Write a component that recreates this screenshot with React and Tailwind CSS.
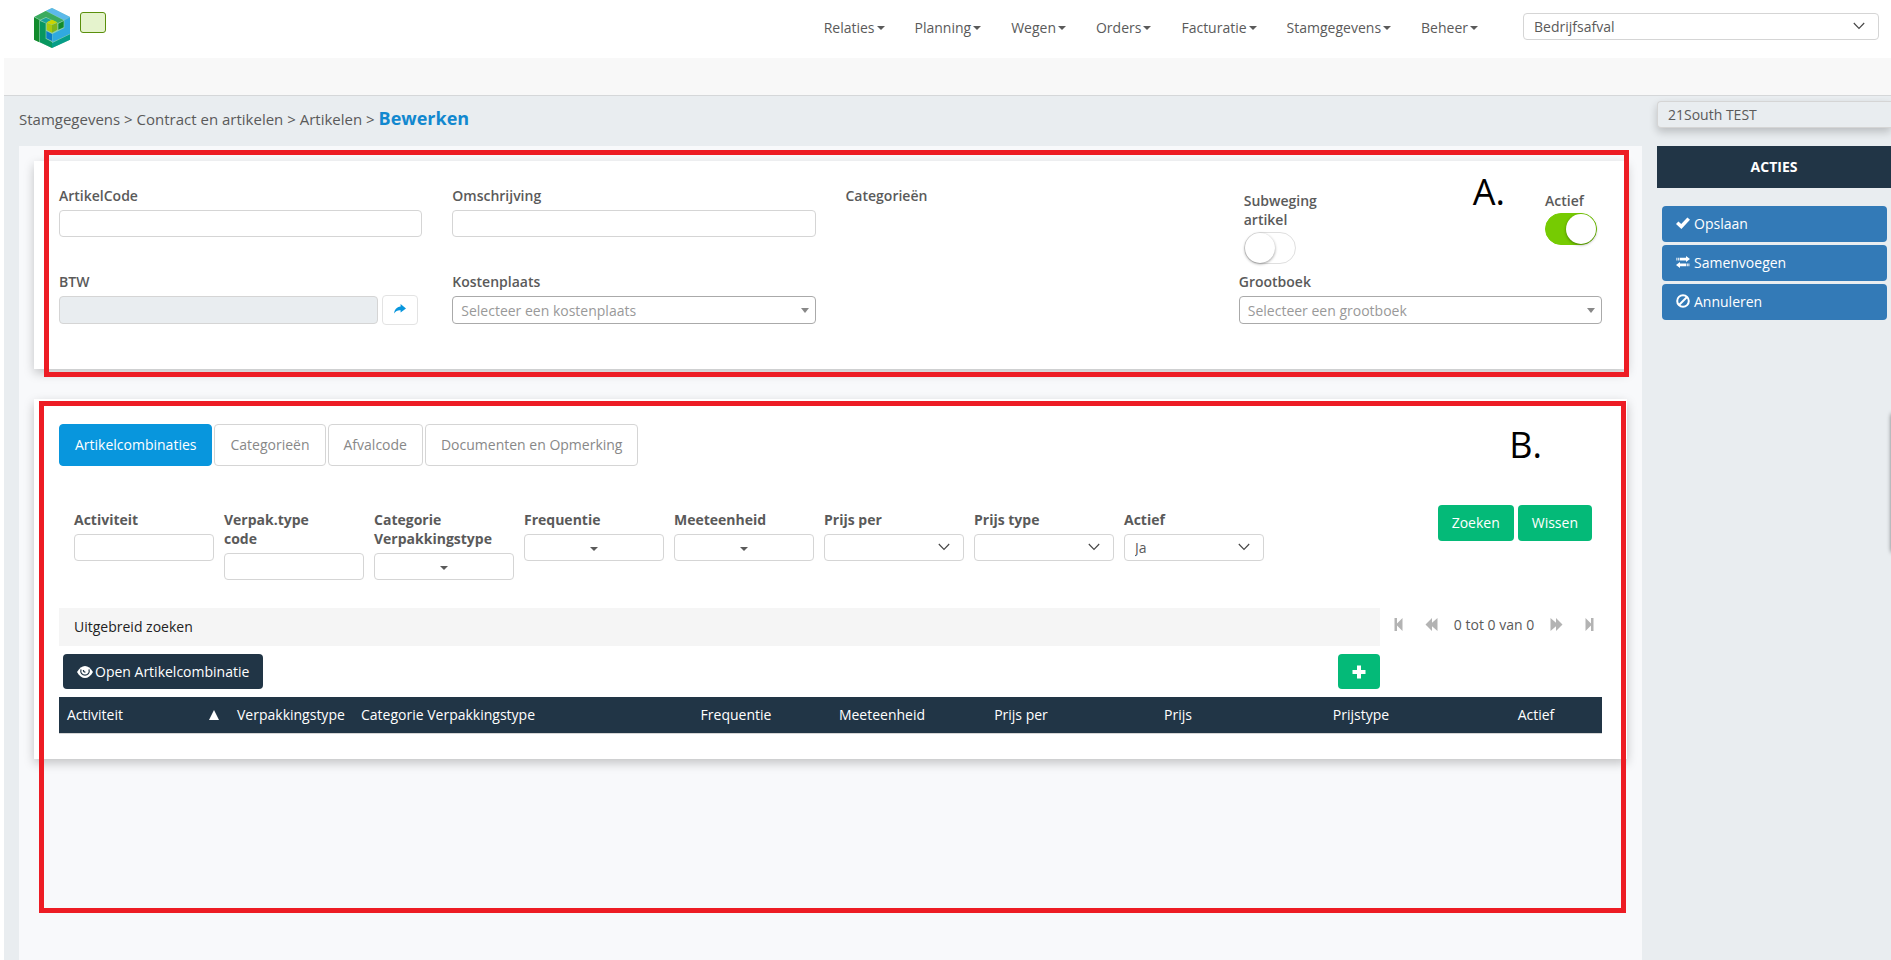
import { useState } from 'react';

const menuItems = ['Relaties', 'Planning', 'Wegen', 'Orders', 'Facturatie', 'Stamgegevens', 'Beheer'];

const tabs = ['Artikelcombinaties', 'Categorieën', 'Afvalcode', 'Documenten en Opmerking'];

const filters = [
    { id: 'activiteit', label: 'Activiteit', type: 'text' },
    { id: 'verpaktype', label: 'Verpak.type code', type: 'text' },
    { id: 'categorie', label: 'Categorie Verpakkingstype', type: 'menu' },
    { id: 'frequentie', label: 'Frequentie', type: 'menu' },
    { id: 'meeteenheid', label: 'Meeteenheid', type: 'menu' },
    { id: 'prijsper', label: 'Prijs per', type: 'select', options: [''] },
    { id: 'prijstype', label: 'Prijs type', type: 'select', options: [''] },
    { id: 'filteractief', label: 'Actief', type: 'select', options: ['Ja', 'Nee'] },
];

const columns = [
    { name: 'Verpakkingstype', className: 'w-[124px] text-left' },
    { name: 'Categorie Verpakkingstype', className: 'w-[293px] text-left' },
    { name: 'Frequentie', className: 'w-[180px] text-center' },
    { name: 'Meeteenheid', className: 'w-[112px] text-center' },
    { name: 'Prijs per', className: 'w-[166px] text-center' },
    { name: 'Prijs', className: 'w-[148px] text-center' },
    { name: 'Prijstype', className: 'w-[218px] text-center' },
    { name: 'Actief', className: 'w-[132px] text-center' },
];

const inputClass = 'block w-full h-[27px] px-2.5 bg-white border border-[#d5d5d5] rounded focus:outline-none focus:border-[#0896dd]';
const cardClass = 'bg-white px-[25px] shadow-[0_4px_10px_rgba(0,0,0,0.22)]';
const actionClass = 'flex items-center gap-1 h-9 pl-3.5 pb-0.5 rounded bg-[#337ab7]';

function Logo() {
    return (
        <svg viewBox="0 0 108 120" className="w-9 h-10" aria-label="Logo">
            <polygon points="0,27 54,0 108,27 108,95 54,120 0,95" fill="#8ccfae" />
            <polygon points="36,8 54,0 108,27 90,36" fill="#5cb9ea" />
            <polygon points="91,37 108,28 108,77 55,103 55,78 91,60" fill="#30a9e0" />
            <polygon points="37,69 54,78 54,99 37,91" fill="#0a7dc8" />
            <polygon points="2,26 35,9 89,37 72,45 36,27 18,35" fill="#3bab5f" />
            <polygon points="0,28 16,36 16,103 0,95" fill="#128b2c" />
            <polygon points="73,47 89,39 89,58 73,65" fill="#128b2c" />
            <polygon points="20,37 36,29 52,36 36,45" fill="#1aa39c" />
            <polygon points="18,39 35,46 35,92 54,102 54,120 18,103" fill="#08975f" />
            <polygon points="56,104 108,79 108,95 54,120 54,104" fill="#069d88" />
            <polygon points="54,35 70,43 54,50 38,43" fill="#cbd500" />
            <polygon points="38,44 54,51 54,74 38,66" fill="#a9c90f" />
            <polygon points="54,51 70,44 70,65 54,74" fill="#7fb51c" />
        </svg>
    );
}

function Caret() {
    return <span className="inline-block border-x-4 border-t-4 border-x-transparent border-t-current" />;
}

function Chevron() {
    return (
        <svg viewBox="0 0 12 8" className="absolute right-3.5 top-[9px] w-3 h-2 pointer-events-none" fill="none" stroke="#444" strokeWidth="1.1">
            <path d="M0.8 1 L6 6.5 L11.2 1" />
        </svg>
    );
}

function CheckIcon() {
    return (
        <svg viewBox="0 0 14 12" className="w-3.5 h-3" fill="currentColor">
            <path d="M0 7 L2.4 4.4 L5.2 7 L11.4 0.4 L14 2.8 L5.4 12 Z" />
        </svg>
    );
}

function TransferIcon() {
    return (
        <svg viewBox="0 0 14 12" className="w-3.5 h-3" fill="currentColor">
            <path d="M4 1.8h6V0l4 3-4 3V4.4H4zM2.2 1.8h1.2v2.6H2.2zM0.4 1.8h1v2.6h-1z" />
            <path d="M10 7.6H4V6L0 9l4 3v-1.8h6zM10.6 7.6h1.2v2.6h-1.2zM12.4 7.6h1v2.6h-1z" />
        </svg>
    );
}

function BanIcon() {
    return (
        <svg viewBox="0 0 14 14" className="w-3.5 h-3.5" fill="none" stroke="currentColor" strokeWidth="2">
            <circle cx="7" cy="7" r="5.8" />
            <path d="M3 11 L11 3" />
        </svg>
    );
}

function ShareIcon() {
    return (
        <svg viewBox="0 0 12 10" className="w-3 h-2.5" fill="#0896dd">
            <path d="M6.6 0 L12 4.4 L6.6 8.6 V6.2 C3.6 6 1.8 7 0.2 9.4 C0.4 5.6 2.6 2.8 6.6 2.4 Z" />
        </svg>
    );
}

function EyeIcon() {
    return (
        <svg viewBox="0 0 16 12" className="w-4 h-3">
            <path d="M0 6 C2.4 2 5 0 8 0 C11 0 13.6 2 16 6 C13.6 10 11 12 8 12 C5 12 2.4 10 0 6 Z" fill="currentColor" />
            <path d="M4 3.4 C3 7 5.4 9.2 8 9.2 C10.6 9.2 13 7 12 3.4" fill="none" stroke="#213546" strokeWidth="1.2" />
            <path d="M6.4 4 C6.4 5.6 7 6.2 8.4 6.2" fill="none" stroke="#213546" strokeWidth="1.2" />
        </svg>
    );
}

// bar: single arrow against a bar (first/last), otherwise a double arrow
function PagerIcon({ bar, flip }) {
    return (
        <svg viewBox="0 0 14 13" className={flip ? 'w-3.5 h-[13px] -scale-x-100' : 'w-3.5 h-[13px]'} fill="#b3b3b3">
            {bar ? <path d="M2.5 0h2.5v5.6L10.5 0v13L5 7.4V13H2.5z" /> : <path d="M7 0v4.8L12.5 0v13L7 8.2V13L0.5 6.5z" />}
        </svg>
    );
}

function Toggle({ id, label, checked, onChange }) {
    return (
        <div className="w-20 pt-[5px]">
            <label htmlFor={id} className="block font-semibold mb-[3px]">{label}</label>
            <input
                id={id}
                type="checkbox"
                role="switch"
                checked={checked}
                onChange={onChange}
                className="block appearance-none w-[52px] h-8 rounded-full border border-[#dfdfdf] bg-white cursor-pointer before:block before:size-[30px] before:rounded-full before:bg-white before:shadow-[0_1px_3px_rgba(0,0,0,0.4)] checked:bg-[#76cb02] checked:border-[#76cb02] checked:before:ml-5"
            />
        </div>
    );
}

function SearchSelect({ id, label, placeholder, className }) {
    return (
        <div className={className}>
            <label htmlFor={id} className="block font-semibold mb-[5px]">{label}</label>
            <div className="relative">
                <select id={id} className="block appearance-none w-full h-7 pl-2 pr-6 bg-white border border-[#aaa] rounded text-[#999] focus:outline-none">
                    <option>{placeholder}</option>
                </select>
                <span className="absolute right-[7px] top-3 border-x-4 border-t-5 border-x-transparent border-t-[#888] pointer-events-none" />
            </div>
        </div>
    );
}

function Filter({ filter }) {
    return (
        <div className="w-[140px]">
            <label htmlFor={filter.id} className="block font-bold pr-5 mb-[5px]">{filter.label}</label>
            {filter.type === 'text' && <input id={filter.id} type="text" className={inputClass} />}
            {filter.type === 'menu' && (
                <button id={filter.id} type="button" className="flex items-center justify-center w-full h-[27px] pt-0.5 bg-white border border-[#d5d5d5] rounded">
                    <Caret />
                </button>
            )}
            {filter.type === 'select' && (
                <div className="relative">
                    <select id={filter.id} className={`${inputClass} appearance-none`}>
                        {filter.options.map((option) => (
                            <option key={option}>{option}</option>
                        ))}
                    </select>
                    <Chevron />
                </div>
            )}
        </div>
    );
}

function Header() {
    return (
        <header className="flex items-start h-[58px] pl-[34px] pr-3 bg-white">
            <div className="pt-2">
                <Logo />
            </div>
            <div className="w-[26px] h-[21px] mt-3 ml-2.5 border border-[#5a8f0c] rounded-[3px] bg-[#e5f3cd]" />
            <nav className="flex gap-[30px] ml-auto mr-[45px] mt-[18px]">
                {menuItems.map((item) => (
                    <a key={item} href="#" className="flex items-center gap-0.5 leading-5">
                        {item}
                        <Caret />
                    </a>
                ))}
            </nav>
            <div className="relative w-[356px] mt-[13px]">
                <select aria-label="Administratie" className={`${inputClass} appearance-none`}>
                    <option>Bedrijfsafval</option>
                </select>
                <Chevron />
            </div>
        </header>
    );
}

function Sidebar() {
    return (
        <aside className="w-[234px] shrink-0 pt-[5px]">
            <div className="h-[27px] pl-2.5 leading-[26px] border border-r-0 border-[#d5d5d5] rounded-l bg-[#e9edf0] shadow-[0_4px_8px_rgba(0,0,0,0.2)]">21South TEST</div>
            <h2 className="mt-[18px] h-[42px] leading-[42px] text-center font-bold text-white bg-[#213546]">ACTIES</h2>
            <div className="flex flex-col gap-[3px] mt-[18px] pl-[5px] pr-1 text-white">
                <button type="button" className={actionClass}><CheckIcon />Opslaan</button>
                <button type="button" className={actionClass}><TransferIcon />Samenvoegen</button>
                <button type="button" className={actionClass}><BanIcon />Annuleren</button>
            </div>
        </aside>
    );
}

function ArticleForm() {
    const [subweging, setSubweging] = useState(false);
    const [actief, setActief] = useState(true);

    return (
        <section className={`${cardClass} pt-[25px] pb-[45px]`}>
            <div className="grid grid-cols-4 gap-x-[30px] grid-rows-[86px_52px]">
                <div>
                    <label htmlFor="code" className="block font-semibold mb-[5px]">ArtikelCode</label>
                    <input id="code" type="text" className={inputClass} />
                </div>
                <div>
                    <label htmlFor="omschrijving" className="block font-semibold mb-[5px]">Omschrijving</label>
                    <input id="omschrijving" type="text" className={inputClass} />
                </div>
                <div className="font-semibold">Categorieën</div>
                <div className="flex justify-between pl-[5px]">
                    <Toggle id="subweging" label="Subweging artikel" checked={subweging} onChange={(e) => setSubweging(e.target.checked)} />
                    <div className="-mr-[23px]">
                        <Toggle id="actief" label="Actief" checked={actief} onChange={(e) => setActief(e.target.checked)} />
                    </div>
                </div>
                <div>
                    <label htmlFor="btw" className="block font-semibold mb-1">BTW</label>
                    <div className="flex items-center gap-1 pr-1">
                        <input id="btw" type="text" readOnly className="flex-1 h-7 px-2.5 border border-[#d5d5d5] rounded bg-[#e9edf0]" />
                        <button type="button" aria-label="BTW kiezen" className="flex items-center justify-center w-9 h-[30px] pb-0.5 border border-[#e3e3e3] rounded bg-white"><ShareIcon /></button>
                    </div>
                </div>
                <SearchSelect id="kostenplaats" label="Kostenplaats" placeholder="Selecteer een kostenplaats" />
                <SearchSelect id="grootboek" label="Grootboek" placeholder="Selecteer een grootboek" className="col-start-4" />
            </div>
        </section>
    );
}

function Combinations() {
    const [activeTab, setActiveTab] = useState(tabs[0]);

    return (
        <section className={`${cardClass} mt-[30px] pt-[25px] pb-[25px]`}>
            <div className="flex gap-0.5">
                {tabs.map((tab) => (
                    <button
                        key={tab}
                        type="button"
                        onClick={() => setActiveTab(tab)}
                        className={tab === activeTab ? 'h-[42px] px-[15px] pb-0.5 border border-[#0896dd] rounded bg-[#0896dd] text-white font-medium' : 'h-[42px] px-[15px] pb-0.5 border border-[#d5d5d5] rounded bg-white text-[#888]'}
                    >
                        {tab}
                    </button>
                ))}
            </div>

            <div className="flex justify-between items-start mt-[39px] pl-[15px] pr-2.5">
                <div className="flex gap-2.5 pt-[5px]">
                    {filters.map((filter) => (
                        <Filter key={filter.id} filter={filter} />
                    ))}
                </div>
                <div className="flex gap-1 text-white">
                    <button type="button" className="h-9 px-3.5 pb-0.5 rounded bg-[#04ba78]">Zoeken</button>
                    <button type="button" className="h-9 px-3.5 pb-0.5 rounded bg-[#04ba78]">Wissen</button>
                </div>
            </div>

            <div className="flex mt-7">
                <div className="flex-1">
                    <a href="#" className="block h-[38px] pl-[15px] leading-[38px] bg-[#f5f5f5] text-[#222]">Uitgebreid zoeken</a>
                    <div className="flex justify-between mt-2 pl-1 text-white">
                        <button type="button" className="flex items-center gap-0.5 h-[35px] px-3.5 rounded bg-[#213546]"><EyeIcon />Open Artikelcombinatie</button>
                        <button type="button" aria-label="Toevoegen" className="flex items-center justify-center w-[42px] h-[35px] rounded bg-[#04ba78]">
                            <svg viewBox="0 0 14 14" className="size-3.5" fill="currentColor">
                                <path d="M5 0.5h4V5h4.5v4H9v4.5H5V9H0.5V5H5z" />
                            </svg>
                        </button>
                    </div>
                </div>
                <div className="flex justify-between items-center w-[222px] h-8 pl-3 pr-1.5">
                    <button type="button" aria-label="Eerste"><PagerIcon bar /></button>
                    <div className="flex items-center gap-[15px]">
                        <button type="button" aria-label="Vorige"><PagerIcon /></button>
                        <span>0 tot 0 van 0</span>
                        <button type="button" aria-label="Volgende"><PagerIcon flip /></button>
                    </div>
                    <button type="button" aria-label="Laatste"><PagerIcon bar flip /></button>
                </div>
            </div>

            <table className="table-fixed w-full mt-2 border-b border-[#d5d5d5]">
                <thead className="bg-[#213546] text-white">
                    <tr className="h-9">
                        <th className="w-[170px] px-2 font-normal text-left">
                            <span className="flex justify-between items-center pr-0.5">
                                Activiteit
                                <span className="border-x-5 border-b-10 border-x-transparent border-b-white" />
                            </span>
                        </th>
                        {columns.map((column) => (
                            <th key={column.name} className={`${column.className} px-2 font-normal whitespace-nowrap`}>{column.name}</th>
                        ))}
                    </tr>
                </thead>
                <tbody />
            </table>
        </section>
    );
}

export default function App() {
    return (
        <div className="flex flex-col min-h-screen bg-white font-['Open_Sans',sans-serif] text-[14px] leading-[19px] text-[#5a5a5a] overflow-x-hidden">
            <Header />
            <div className="h-[38px] ml-1 bg-[#f8f8f8] border-b border-[#d5d7d9]" />
            <div className="flex flex-1 gap-[15px] ml-1 pl-[15px] bg-[#e9edf0]">
                <main className="flex flex-col flex-1 min-w-0">
                    <div className="h-[50px] leading-[44px] text-[15px]">
                        <a href="#">Stamgegevens</a> &gt; <a href="#">Contract en artikelen</a> &gt; <a href="#">Artikelen</a> &gt; <span className="text-[18px] font-bold text-[#1288cf]">Bewerken</span>
                    </div>
                    <div className="relative flex-1 p-[15px] bg-[#f8f9fb]">
                        <ArticleForm />
                        <Combinations />

                        {/* marked areas over the panel */}
                        <div className="absolute left-[25px] right-[13px] top-1 h-[227px] border-5 border-[#ed1c24] pointer-events-none">
                            <span className="absolute right-[119px] top-3 text-[36px] leading-[50px] text-black">A.</span>
                        </div>
                        <div className="absolute left-5 right-4 top-[255px] h-[512px] border-5 border-[#ed1c24] pointer-events-none">
                            <span className="absolute right-[79px] top-3.5 text-[36px] leading-[50px] text-black">B.</span>
                        </div>
                    </div>
                </main>
                <Sidebar />
            </div>
            {/* closed side panel, only its edge is visible */}
            <div className="fixed left-full top-[413px] w-10 h-[140px] rounded shadow-[0_0_4px_rgba(0,0,0,0.5)]" />
        </div>
    );
}
